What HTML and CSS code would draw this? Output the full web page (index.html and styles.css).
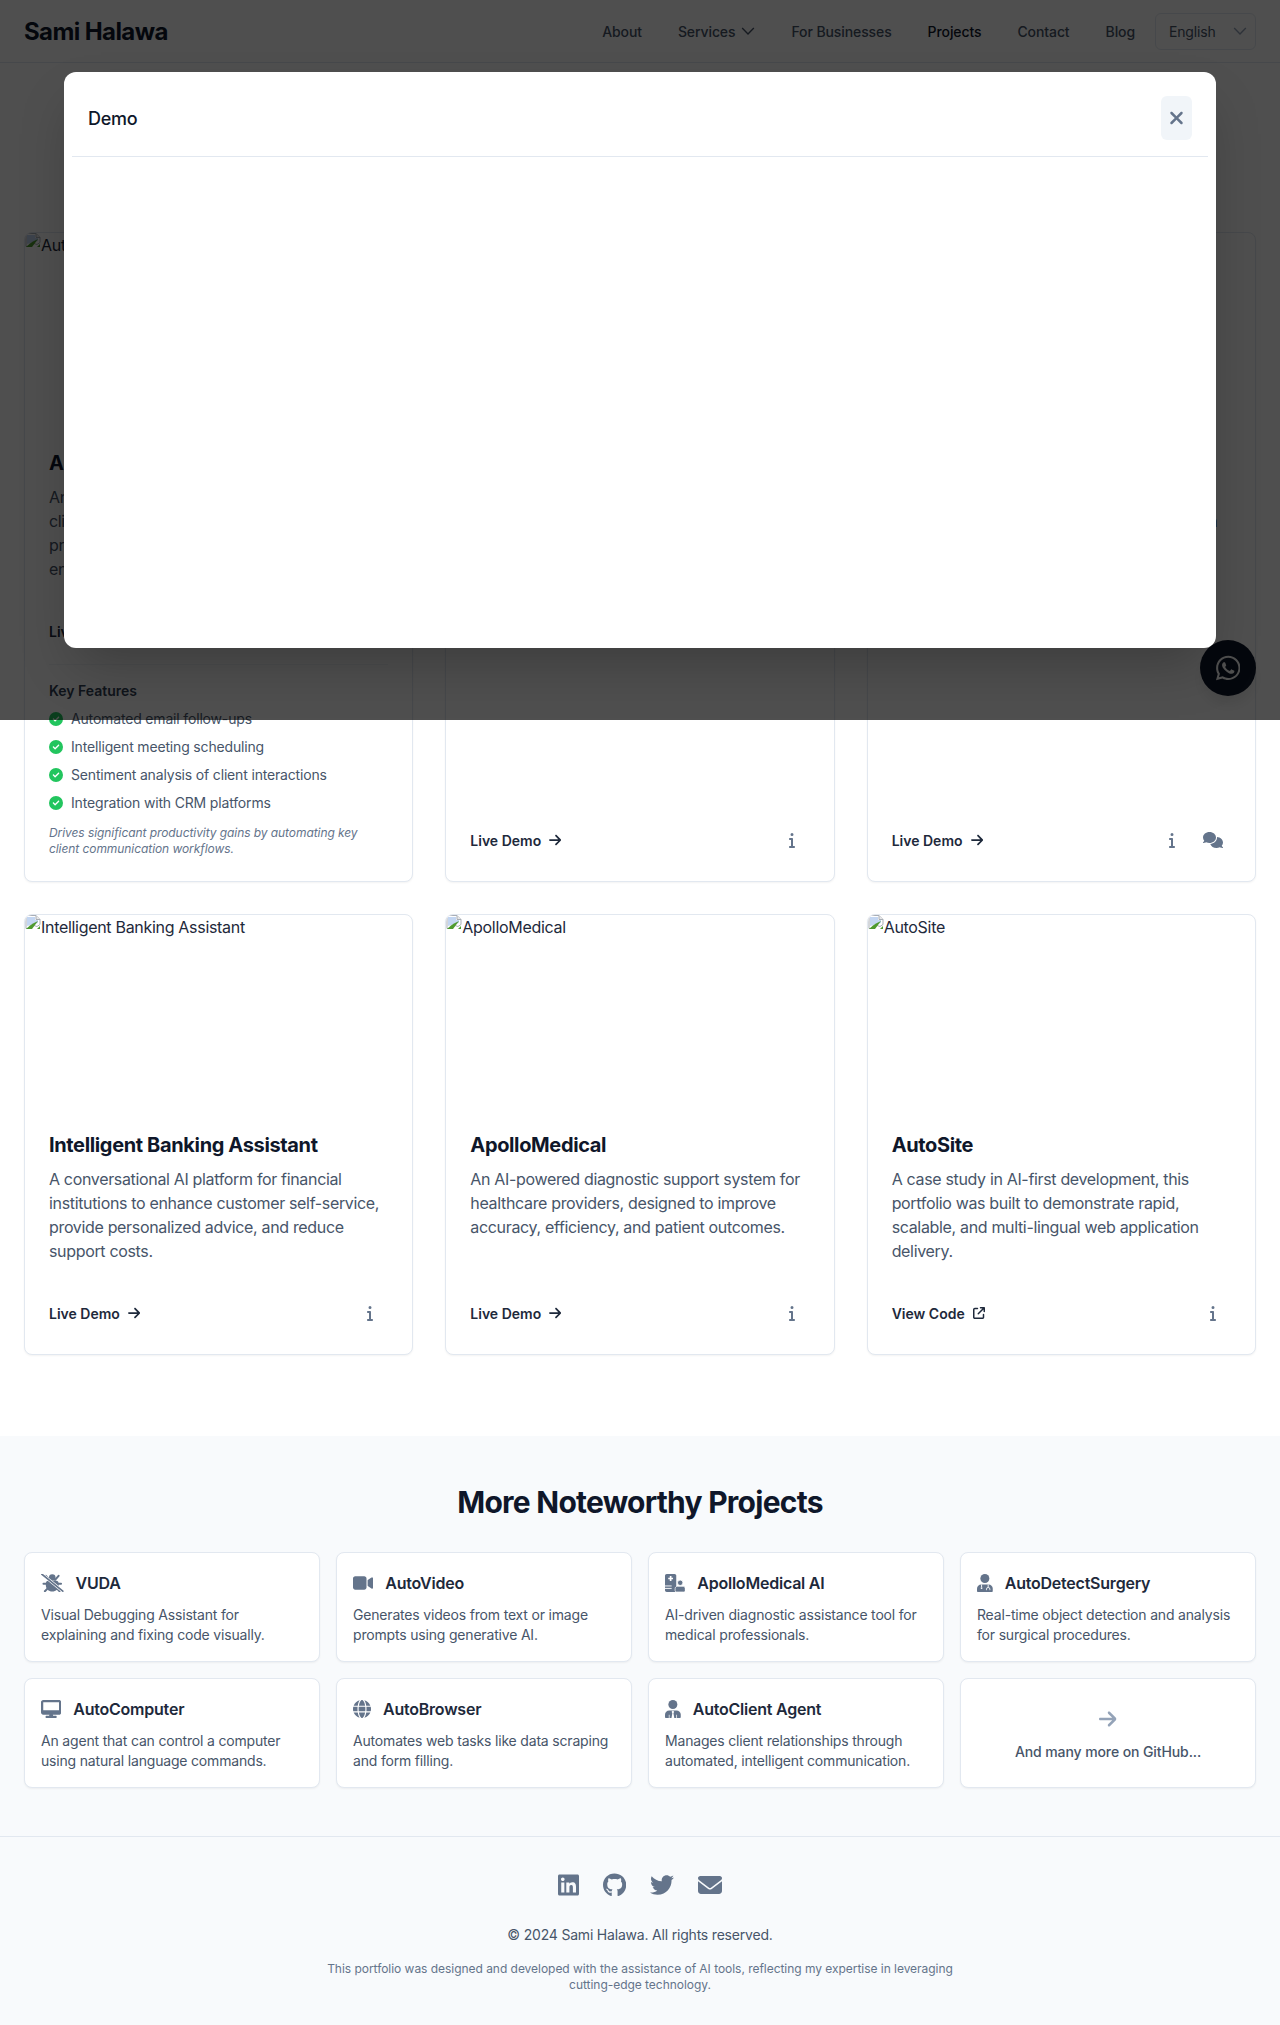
FILE: index.html
```html
<!DOCTYPE html>
<html lang="en">
<head>
  <meta charset="UTF-8">
  <title>Sami Halawa</title>
  <meta name="viewport" content="width=device-width, initial-scale=1.0">
  <link rel="stylesheet" href="styles.css">
</head>
<body>
  <svg class="defs" width="0" height="0" aria-hidden="true">
    <symbol id="i-arrow" viewBox="0 0 448 512"><path d="M438.6 278.6c12.5-12.5 12.5-32.8 0-45.3l-160-160c-12.5-12.5-32.8-12.5-45.3 0s-12.5 32.8 0 45.3L338.8 224 32 224c-17.7 0-32 14.3-32 32s14.3 32 32 32l306.7 0L233.4 393.4c-12.5 12.5-12.5 32.8 0 45.3s32.8 12.5 45.3 0l160-160z"/></symbol>
    <symbol id="i-info" viewBox="0 0 192 512"><path d="M48 80a48 48 0 1 1 96 0A48 48 0 1 1 48 80zM0 224c0-17.7 14.3-32 32-32H96c17.7 0 32 14.3 32 32V448h32c17.7 0 32 14.3 32 32s-14.3 32-32 32H32c-17.7 0-32-14.3-32-32s14.3-32 32-32H64V256H32c-17.7 0-32-14.3-32-32z"/></symbol>
    <symbol id="i-check" viewBox="0 0 512 512"><path d="M256 512A256 256 0 1 0 256 0a256 256 0 1 0 0 512zM369 209L241 337c-9.4 9.4-24.6 9.4-33.9 0l-64-64c-9.4-9.4-9.4-24.6 0-33.9s24.6-9.4 33.9 0l47 47L335 175c9.4-9.4 24.6-9.4 33.9 0s9.4 24.6 0 33.9z"/></symbol>
    <symbol id="i-chevron" viewBox="0 0 12 12"><path d="M1 3.500l5 5 5-5" fill="none" stroke="currentColor" stroke-width="1.200"/></symbol>
    <symbol id="i-broken" viewBox="0 0 16 16">
      <path d="M1 .5h10l4 4v5l-3 2-3-1-4 3H1z" fill="#fff" stroke="#a9aeb6"/>
      <path d="M2 2h8v3h3v3l-11 3z" fill="#c3d6f2"/>
      <path d="M1 14l4-3.500 3-2 5-2.500-6 8H1z" fill="#4e9a2f"/>
      <path d="M11 .5v4h4" fill="#e8e8e8" stroke="#a9aeb6"/>
      <path d="M12 14h3v-3z" fill="#4e9a2f"/>
    </symbol>
  </svg>

  <nav class="nav">
    <a class="logo">Sami Halawa</a>
    <div class="nav-links">
      <a>About</a>
      <a class="has-caret">Services <svg class="caret"><use href="#i-chevron"/></svg></a>
      <a>For Businesses</a>
      <a class="current">Projects</a>
      <a>Contact</a>
      <a>Blog</a>
    </div>
    <div class="lang">English <svg class="caret caret-soft"><use href="#i-chevron"/></svg></div>
  </nav>

  <main class="projects">
    <article class="card">
      <div class="thumb"><svg class="broken"><use href="#i-broken"/></svg>AutoClient</div>
      <div class="card-body">
        <h3>AutoClient</h3>
        <p class="desc">An intelligent agent that manages<br>client communication, automating<br>professional follow-ups and<br>engagement at scale.</p>
        <div class="card-actions">
          <a class="live">Live Demo <svg class="arrow"><use href="#i-arrow"/></svg></a>
          <div class="tools"><span class="tool"><svg class="i-info"><use href="#i-info"/></svg></span></div>
        </div>
        <div class="features">
          <h4>Key Features</h4>
          <ul>
            <li><svg class="tick"><use href="#i-check"/></svg>Automated email follow-ups</li>
            <li><svg class="tick"><use href="#i-check"/></svg>Intelligent meeting scheduling</li>
            <li><svg class="tick"><use href="#i-check"/></svg>Sentiment analysis of client interactions</li>
            <li><svg class="tick"><use href="#i-check"/></svg>Integration with CRM platforms</li>
          </ul>
          <p class="impact">Drives significant productivity gains by automating key client communication workflows.</p>
        </div>
      </div>
    </article>

    <article class="card">
      <div class="thumb"><svg class="broken"><use href="#i-broken"/></svg>AutoDoc</div>
      <div class="card-body">
        <h3>AutoDoc</h3>
        <p class="desc">A documentation agent that reads source code and writes clear guides for developers and teams.</p>
        <div class="card-actions">
          <a class="live">Live Demo <svg class="arrow"><use href="#i-arrow"/></svg></a>
          <div class="tools"><span class="tool"><svg class="i-info"><use href="#i-info"/></svg></span></div>
        </div>
      </div>
    </article>

    <article class="card">
      <div class="thumb"><svg class="broken"><use href="#i-broken"/></svg>AutoChat</div>
      <div class="card-body">
        <h3>AutoChat</h3>
        <p class="desc">A conversational agent for websites,<br>trained on company knowledge and built to a<br>answer customer questions at any<br>hour of the day.</p>
        <div class="card-actions">
          <a class="live">Live Demo <svg class="arrow"><use href="#i-arrow"/></svg></a>
          <div class="tools">
            <span class="tool"><svg class="i-info"><use href="#i-info"/></svg></span>
            <span class="tool"><svg class="i-comments" viewBox="0 0 640 512"><path d="M208 352c114.9 0 208-78.8 208-176S322.9 0 208 0S0 78.8 0 176c0 38.6 14.7 74.3 39.6 103.4c-3.5 9.4-8.7 17.7-14.2 24.7c-4.8 6.2-9.7 11-13.3 14.3c-1.8 1.6-3.3 2.9-4.3 3.7c-.5 .4-.9 .7-1.1 .8l-.2 .2 0 0 0 0C1 327.2-1.4 334.4 .8 340.9S9.1 352 16 352c21.8 0 43.8-5.6 62.1-12.5c9.2-3.5 17.8-7.4 25.3-11.4C134.1 343.3 169.8 352 208 352zM448 176c0 112.3-99.1 196.9-216.5 207C255.8 457.4 336.4 512 432 512c38.2 0 73.9-8.7 104.7-23.9c7.5 4 16 7.9 25.2 11.4c18.3 6.9 40.3 12.5 62.1 12.5c6.9 0 13.1-4.5 15.2-11.1c2.1-6.6-.2-13.8-5.8-17.9l0 0 0 0-.2-.2c-.2-.2-.6-.4-1.1-.8c-1-.8-2.5-2-4.3-3.7c-3.6-3.3-8.5-8.1-13.3-14.3c-5.5-7-10.7-15.4-14.2-24.7c24.9-29 39.6-64.7 39.6-103.4c0-92.8-84.9-168.9-192.6-175.5c.4 5.1 .6 10.3 .6 15.5z"/></svg></span>
          </div>
        </div>
      </div>
    </article>

    <article class="card">
      <div class="thumb"><svg class="broken"><use href="#i-broken"/></svg>Intelligent Banking Assistant</div>
      <div class="card-body">
        <h3>Intelligent Banking Assistant</h3>
        <p class="desc">A conversational AI platform for financial institutions to enhance customer self-service, provide personalized advice, and reduce support costs.</p>
        <div class="card-actions">
          <a class="live">Live Demo <svg class="arrow"><use href="#i-arrow"/></svg></a>
          <div class="tools"><span class="tool"><svg class="i-info"><use href="#i-info"/></svg></span></div>
        </div>
      </div>
    </article>

    <article class="card">
      <div class="thumb"><svg class="broken"><use href="#i-broken"/></svg>ApolloMedical</div>
      <div class="card-body">
        <h3>ApolloMedical</h3>
        <p class="desc">An AI-powered diagnostic support system for healthcare providers, designed to improve accuracy, efficiency, and patient outcomes.</p>
        <div class="card-actions">
          <a class="live">Live Demo <svg class="arrow"><use href="#i-arrow"/></svg></a>
          <div class="tools"><span class="tool"><svg class="i-info"><use href="#i-info"/></svg></span></div>
        </div>
      </div>
    </article>

    <article class="card">
      <div class="thumb"><svg class="broken"><use href="#i-broken"/></svg>AutoSite</div>
      <div class="card-body">
        <h3>AutoSite</h3>
        <p class="desc">A case study in AI-first development, this portfolio was built to demonstrate rapid, scalable, and multi-lingual web application delivery.</p>
        <div class="card-actions">
          <a class="live">View Code <svg class="ext" viewBox="0 0 512 512"><path d="M320 0c-17.7 0-32 14.3-32 32s14.3 32 32 32h82.7L201.4 265.4c-12.5 12.5-12.5 32.8 0 45.3s32.8 12.5 45.3 0L448 109.3V192c0 17.7 14.3 32 32 32s32-14.3 32-32V32c0-17.7-14.3-32-32-32H320zM80 32C35.8 32 0 67.8 0 112V432c0 44.2 35.8 80 80 80H400c44.2 0 80-35.8 80-80V320c0-17.7-14.3-32-32-32s-32 14.3-32 32V432c0 8.8-7.2 16-16 16H80c-8.8 0-16-7.2-16-16V112c0-8.8 7.2-16 16-16H192c17.7 0 32-14.3 32-32s-14.3-32-32-32H80z"/></svg></a>
          <div class="tools"><span class="tool"><svg class="i-info"><use href="#i-info"/></svg></span></div>
        </div>
      </div>
    </article>
  </main>

  <section class="more">
    <h2>More Noteworthy Projects</h2>
    <div class="more-grid">
      <div class="mini">
        <h4>
          <svg class="mini-icon" viewBox="0 0 640 512">
            <circle cx="320" cy="100" r="92"/>
            <path d="M198 190h244c34 0 60 34 60 90v40c0 96-76 180-182 180s-182-84-182-180v-40c0-56 26-90 60-90z"/>
            <path d="M140 50l100 120M500 50l-100 120M70 280h140M570 280h-140M110 490l110-110M530 490l-110-110" fill="none" stroke="#64748b" stroke-width="56" stroke-linecap="round"/>
            <path d="M20 0l600 490" fill="none" stroke="#fff" stroke-width="84"/>
            <path d="M20 0l600 490" fill="none" stroke="#64748b" stroke-width="46" stroke-linecap="round"/>
          </svg>
          VUDA
        </h4>
        <p>Visual Debugging Assistant for explaining and fixing code visually.</p>
      </div>
      <div class="mini">
        <h4>
          <svg class="mini-icon" viewBox="0 0 576 512"><path d="M0 128C0 92.7 28.7 64 64 64H320c35.3 0 64 28.7 64 64V384c0 35.3-28.7 64-64 64H64c-35.3 0-64-28.7-64-64V128zM559.1 99.8c10.4 5.6 16.9 16.4 16.9 28.2V384c0 11.8-6.5 22.6-16.9 28.2s-23 5-32.9-1.6l-96-64L416 337.1V320 192 174.9l14.2-9.5 96-64c9.8-6.5 22.4-7.2 32.9-1.6z"/></svg>
          AutoVideo
        </h4>
        <p>Generates videos from text or image prompts using generative AI.</p>
      </div>
      <div class="mini">
        <h4>
          <svg class="mini-icon" viewBox="0 0 576 512">
            <path d="M48 0h224c26 0 48 22 48 48v416c0 26-22 48-48 48H48c-26 0-48-22-48-48V48C0 22 22 0 48 0z"/>
            <path d="M136 60h48v44h44v48h-44v44h-48v-44H92v-48h44z" fill="#fff"/>
            <path d="M0 340h190M0 410h190" stroke="#fff" stroke-width="26"/>
            <circle cx="432" cy="250" r="78" stroke="#fff" stroke-width="24"/>
            <path d="M352 350h160c36 0 64 30 64 66v56c0 22-18 40-40 40H328c-22 0-40-18-40-40v-56c0-36 28-66 64-66z" stroke="#fff" stroke-width="20"/>
          </svg>
          ApolloMedical AI
        </h4>
        <p>AI-driven diagnostic assistance tool for medical professionals.</p>
      </div>
      <div class="mini">
        <h4>
          <svg class="mini-icon" viewBox="0 0 448 512">
            <circle cx="224" cy="128" r="128"/>
            <path d="M120 300h208c66 0 120 54 120 120v60c0 18-14 32-32 32H32c-18 0-32-14-32-32v-60c0-66 54-120 120-120z"/>
            <path d="M130 300v70M318 300v80" stroke="#fff" stroke-width="26" fill="none"/>
            <circle cx="130" cy="400" r="26" fill="#fff"/>
            <path d="M270 460v-30a48 48 0 0 1 96 0v30" stroke="#fff" stroke-width="24" fill="none"/>
          </svg>
          AutoDetectSurgery
        </h4>
        <p>Real-time object detection and analysis for surgical procedures.</p>
      </div>
      <div class="mini">
        <h4>
          <svg class="mini-icon" viewBox="0 0 576 512"><path d="M64 0C28.700 0 0 28.700 0 64V352c0 35.300 28.700 64 64 64H240l-10.700 32H160c-17.700 0-32 14.300-32 32s14.300 32 32 32H416c17.700 0 32-14.300 32-32s-14.300-32-32-32H346.700L336 416H512c35.300 0 64-28.700 64-64V64c0-35.300-28.700-64-64-64H64zM512 64V288H64V64H512z"/></svg>
          AutoComputer
        </h4>
        <p>An agent that can control a computer using natural language commands.</p>
      </div>
      <div class="mini">
        <h4>
          <svg class="mini-icon" viewBox="0 0 512 512"><path d="M352 256c0 22.2-1.2 43.6-3.3 64H163.3c-2.2-20.4-3.3-41.8-3.3-64s1.2-43.6 3.3-64H348.7c2.2 20.4 3.3 41.8 3.3 64zm28.8-64H503.9c5.3 20.5 8.1 41.9 8.1 64s-2.8 43.5-8.1 64H380.8c2.1-20.6 3.2-42 3.2-64s-1.1-43.4-3.2-64zm112.6-32H376.7c-10-63.9-29.8-117.4-55.3-151.6c78.3 20.7 142 77.5 171.9 151.6zm-149.1 0H167.7c6.1-36.4 15.5-68.6 27-94.7c10.5-23.6 22.2-40.7 33.5-51.5C239.4 3.2 248.7 0 256 0s16.6 3.2 27.8 13.8c11.3 10.8 23 27.9 33.5 51.5c11.6 26 20.9 58.2 27 94.7zm-209 0H18.6C48.6 85.9 112.2 29.1 190.6 8.4C165.1 42.6 145.3 96.1 135.3 160zM8.1 192H131.2c-2.1 20.6-3.2 42-3.2 64s1.1 43.4 3.2 64H8.1C2.8 299.5 0 278.1 0 256s2.8-43.5 8.1-64zM194.7 446.6c-11.6-26-20.9-58.2-27-94.6H344.3c-6.1 36.4-15.5 68.6-27 94.6c-10.5 23.6-22.2 40.7-33.5 51.5C272.6 508.8 263.3 512 256 512s-16.6-3.2-27.8-13.8c-11.3-10.8-23-27.9-33.5-51.5zM135.3 352c10 63.9 29.8 117.4 55.3 151.6C112.2 482.9 48.6 426.1 18.6 352H135.3zm358.1 0c-30 74.1-93.6 130.9-171.9 151.6c25.5-34.2 45.2-87.7 55.3-151.6H493.4z"/></svg>
          AutoBrowser
        </h4>
        <p>Automates web tasks like data scraping and form filling.</p>
      </div>
      <div class="mini">
        <h4>
          <svg class="mini-icon" viewBox="0 0 448 512">
            <circle cx="224" cy="128" r="128"/>
            <path d="M120 300h208c66 0 120 54 120 120v60c0 18-14 32-32 32H32c-18 0-32-14-32-32v-60c0-66 54-120 120-120z"/>
            <path d="M224 300l-36 36 20 40-24 136h80l-24-136 20-40z" fill="#fff"/>
            <path d="M120 420v92M328 420v92" stroke="#fff" stroke-width="20"/>
          </svg>
          AutoClient Agent
        </h4>
        <p>Manages client relationships through automated, intelligent communication.</p>
      </div>
      <div class="mini mini-more">
        <svg class="more-arrow"><use href="#i-arrow"/></svg>
        <p>And many more on GitHub...</p>
      </div>
    </div>
  </section>

  <footer class="footer">
    <div class="social">
      <svg viewBox="0 0 448 512" class="s-448"><path d="M416 32H31.900C14.300 32 0 46.500 0 64.300v383.400C0 465.500 14.300 480 31.900 480H416c17.600 0 32-14.500 32-32.300V64.300c0-17.800-14.400-32.300-32-32.300zM135.400 416H69V202.200h66.500V416zm-33.200-243c-21.300 0-38.500-17.300-38.500-38.500S80.900 96 102.200 96c21.200 0 38.500 17.300 38.500 38.500 0 21.300-17.200 38.500-38.500 38.500zm282.100 243h-66.400V312c0-24.800-.5-56.700-34.500-56.700-34.600 0-39.900 27-39.900 54.900V416h-66.400V202.200h63.700v29.200h.9c8.900-16.800 30.600-34.500 62.900-34.500 67.200 0 79.700 44.300 79.700 101.900V416z"/></svg>
      <svg viewBox="0 0 496 512" class="s-496"><path d="M165.900 397.400c0 2-2.300 3.600-5.200 3.600-3.300.3-5.600-1.300-5.600-3.600 0-2 2.300-3.600 5.200-3.600 3-.3 5.600 1.300 5.600 3.600zm-31.100-4.500c-.7 2 1.300 4.300 4.300 4.900 2.600 1 5.600 0 6.200-2s-1.300-4.300-4.300-5.200c-2.600-.7-5.500.3-6.200 2.300zm44.200-1.700c-2.900.7-4.900 2.600-4.600 4.900.3 2 2.900 3.300 5.900 2.600 2.900-.7 4.900-2.600 4.600-4.600-.3-1.900-3-3.200-5.900-2.900zM244.800 8C106.100 8 0 113.300 0 252c0 110.900 69.800 205.800 169.500 239.200 12.800 2.300 17.300-5.600 17.300-12.100 0-6.200-.3-40.400-.3-61.400 0 0-70 15-84.700-29.800 0 0-11.400-29.100-27.800-36.600 0 0-22.900-15.700 1.600-15.400 0 0 24.900 2 38.600 25.800 21.900 38.600 58.600 27.500 72.900 20.900 2.300-16 8.800-27.100 16-33.700-55.900-6.200-112.300-14.300-112.300-110.500 0-27.500 7.600-41.300 23.600-58.900-2.600-6.500-11.100-33.300 2.600-67.900 20.900-6.500 69 27 69 27 20-5.600 41.500-8.500 62.800-8.500s42.800 2.900 62.800 8.500c0 0 48.100-33.600 69-27 13.700 34.700 5.200 61.400 2.600 67.900 16 17.700 25.800 31.500 25.800 58.900 0 96.500-58.900 104.200-114.800 110.500 9.200 7.900 17 22.900 17 46.400 0 33.700-.3 75.400-.3 83.600 0 6.500 4.600 14.400 17.300 12.100C428.200 457.800 496 362.900 496 252 496 113.300 383.500 8 244.800 8z"/></svg>
      <svg viewBox="0 0 512 512" class="s-512"><path d="M459.370 151.716c.325 4.548.325 9.097.325 13.645 0 138.720-105.583 298.558-298.558 298.558-59.452 0-114.680-17.219-161.137-47.106 8.447.974 16.568 1.299 25.340 1.299 49.055 0 94.213-16.568 130.274-44.832-46.132-.975-84.792-31.188-98.112-72.772 6.498.974 12.995 1.624 19.818 1.624 9.421 0 18.843-1.300 27.614-3.573-48.081-9.747-84.143-51.980-84.143-102.985v-1.299c13.969 7.797 30.214 12.670 47.431 13.319-28.264-18.843-46.781-51.005-46.781-87.391 0-19.492 5.197-37.360 14.294-52.954 51.655 63.675 129.300 105.258 216.365 109.807-1.624-7.797-2.599-15.918-2.599-24.040 0-57.828 46.782-104.934 104.934-104.934 30.213 0 57.502 12.670 76.670 33.137 23.715-4.548 46.456-13.320 66.599-25.340-7.798 24.366-24.366 44.833-46.132 57.827 21.117-2.273 41.584-8.122 60.426-16.243-14.292 20.791-32.161 39.308-52.628 54.253z"/></svg>
      <svg viewBox="0 0 512 512" class="s-512"><path d="M48 64C21.500 64 0 85.500 0 112c0 15.100 7.100 29.300 19.200 38.400L236.800 313.600c11.400 8.500 27 8.500 38.400 0L492.800 150.400c12.100-9.100 19.200-23.300 19.200-38.400c0-26.500-21.500-48-48-48H48zM0 176V384c0 35.300 28.700 64 64 64H448c35.300 0 64-28.700 64-64V176L294.400 339.200c-22.800 17.100-52 17.100-76.800 0L0 176z"/></svg>
    </div>
    <p class="copy">© 2024 Sami Halawa. All rights reserved.</p>
    <p class="note">This portfolio was designed and developed with the assistance of AI tools, reflecting my expertise in leveraging cutting-edge technology.</p>
  </footer>

  <a class="whatsapp">
    <svg viewBox="0 0 448 512"><path d="M380.900 97.100C339 55.100 283.200 32 223.900 32c-122.400 0-222 99.600-222 222 0 39.100 10.200 77.300 29.600 111L0 480l117.700-30.900c32.400 17.700 68.900 27 106.100 27h.1c122.300 0 224.100-99.600 224.100-222 0-59.300-25.200-115-67.100-157zm-157 341.600c-33.200 0-65.700-8.900-94-25.700l-6.700-4-69.800 18.300L72 359.200l-4.400-7c-18.500-29.400-28.200-63.300-28.200-98.200 0-101.700 82.800-184.500 184.600-184.500 49.300 0 95.600 19.200 130.400 54.100 34.800 34.900 56.200 81.200 56.100 130.500 0 101.800-84.900 184.600-186.600 184.600zm101.200-138.200c-5.500-2.800-32.800-16.200-37.900-18-5.100-1.900-8.800-2.800-12.500 2.800-3.700 5.600-14.300 18-17.600 21.800-3.200 3.700-6.500 4.200-12 1.400-32.600-16.300-54-29.100-75.500-66-5.700-9.800 5.700-9.100 16.300-30.300 1.800-3.700.9-6.900-.5-9.700-1.400-2.800-12.500-30.100-17.100-41.200-4.500-10.800-9.100-9.300-12.500-9.500-3.200-.2-6.900-.2-10.600-.2-3.700 0-9.700 1.400-14.800 6.900-5.100 5.600-19.400 19-19.400 46.300 0 27.300 19.900 53.700 22.600 57.400 2.800 3.700 39.100 59.700 94.800 83.800 35.200 15.200 49 16.500 66.600 13.900 10.700-1.600 32.800-13.400 37.400-26.400 4.600-13 4.600-24.100 3.200-26.400-1.300-2.500-5-3.900-10.500-6.600z"/></svg>
  </a>

  <div class="overlay">
    <div class="modal">
      <div class="modal-head">
        <span class="modal-title">Demo</span>
        <button class="modal-close"><svg viewBox="0 0 384 512"><path d="M342.600 150.600c12.500-12.500 12.500-32.800 0-45.300s-32.800-12.500-45.300 0L192 210.700 86.600 105.400c-12.500-12.500-32.800-12.500-45.300 0s-12.500 32.800 0 45.300L146.700 256 41.400 361.400c-12.500 12.500-12.500 32.800 0 45.300s32.800 12.500 45.300 0L192 301.300 297.400 406.600c12.500 12.500 32.800 12.500 45.300 0s12.500-32.800 0-45.300L237.300 256 342.600 150.600z"/></svg></button>
      </div>
    </div>
  </div>
</body>
</html>
```

FILE: styles.css
```css
* {
  box-sizing: border-box;
}
body {
  margin: 0;
  position: relative;
  font-family: 'Inter', 'Liberation Sans', sans-serif;
  background-color: #fff;
  color: #1e293b;
}
h2, h3, h4, p, ul {
  margin: 0;
  padding: 0;
}
.defs {
  position: absolute;
}

/* nav */
.nav {
  height: 63px;
  display: flex;
  align-items: center;
  padding: 0 24px;
  background-color: #fff;
  border-bottom: 1px solid #e2e8f0;
}
.logo {
  font-size: 24px;
  font-weight: 700;
  letter-spacing: -.025em;
  color: #0f172a;
}
.nav-links {
  margin-left: auto;
  display: flex;
  gap: 36px;
  font-size: 14px;
  font-weight: 500;
  letter-spacing: -.007em;
  color: #475569;
}
.nav-links .current {
  color: #0f172a;
}
.has-caret {
  display: flex;
  align-items: center;
  gap: 6px;
}
.caret {
  width: 14px;
  height: 14px;
}
.caret-soft {
  color: #94a3b8;
}
.lang {
  width: 101px;
  height: 37px;
  margin-left: 20px;
  padding: 0 8px 0 13px;
  display: flex;
  align-items: center;
  justify-content: space-between;
  font-size: 14px;
  letter-spacing: -.012em;
  color: #475569;
  border: 1px solid #e2e8f0;
  border-radius: 6px;
}

/* project cards */
.projects {
  padding: 169px 24px 81px;
  display: grid;
  grid-template-columns: repeat(3, 1fr);
  gap: 32px;
}
.card {
  display: flex;
  flex-direction: column;
  background-color: #fff;
  border: 1px solid #e2e8f0;
  border-radius: 8px;
  box-shadow: 0 1px 2px rgba(0, 0, 0, .05);
  overflow: hidden;
}
.thumb {
  height: 192px;
  display: flex;
  align-items: flex-start;
  font-size: 16px;
  line-height: 24px;
  letter-spacing: -.019em;
  color: #1e293b;
}
.broken {
  width: 16px;
  height: 16px;
  flex-shrink: 0;
}
.card-body {
  flex: 1;
  padding: 24px;
  display: flex;
  flex-direction: column;
}
.card h3 {
  font-size: 20px;
  line-height: 28px;
  font-weight: 700;
  letter-spacing: -.018em;
  color: #0f172a;
  margin-bottom: 8px;
}
.desc {
  font-size: 16px;
  line-height: 24px;
  letter-spacing: -.021em;
  color: #475569;
  margin-bottom: 33px;
}
.card-actions {
  margin-top: auto;
  height: 34px;
  display: flex;
  align-items: center;
  justify-content: space-between;
}
.live {
  display: flex;
  align-items: center;
  gap: 8px;
  font-size: 14px;
  font-weight: 600;
  color: #1e293b;
}
.arrow {
  width: 12.25px;
  height: 14px;
  fill: #1e293b;
}
.ext {
  width: 12px;
  height: 12px;
  fill: #1e293b;
}
.tools {
  display: flex;
  gap: 5px;
}
.tool {
  width: 36px;
  height: 34px;
  display: flex;
  align-items: center;
  justify-content: center;
}
.i-info {
  width: 6px;
  height: 16px;
  fill: #64748b;
}
.i-comments {
  width: 20px;
  height: 16px;
  fill: #64748b;
}
.features {
  margin-top: 16px;
  padding-top: 16px;
  border-top: 1px solid #f1f5f9;
}
.features h4 {
  font-size: 14px;
  line-height: 20px;
  font-weight: 600;
  color: #334155;
  margin-bottom: 8px;
}
.features ul {
  list-style: none;
  display: flex;
  flex-direction: column;
  gap: 8px;
}
.features li {
  display: flex;
  align-items: center;
  gap: 8px;
  font-size: 14px;
  line-height: 20px;
  letter-spacing: -.012em;
  color: #475569;
}
.tick {
  width: 14px;
  height: 14px;
  fill: #22c55e;
  flex-shrink: 0;
}
.impact {
  margin-top: 12px;
  font-size: 12px;
  line-height: 16px;
  font-style: italic;
  letter-spacing: -.006em;
  color: #64748b;
}

/* more projects */
.more {
  padding: 48px 24px;
  background-color: #f8fafc;
}
.more h2 {
  font-size: 30px;
  line-height: 36px;
  font-weight: 700;
  letter-spacing: -.025em;
  color: #0f172a;
  text-align: center;
  margin-bottom: 32px;
}
.more-grid {
  display: grid;
  grid-template-columns: repeat(4, 1fr);
  gap: 16px;
}
.mini {
  height: 110px;
  padding: 16px;
  background-color: #fff;
  border: 1px solid #e2e8f0;
  border-radius: 8px;
  box-shadow: 0 1px 2px rgba(0, 0, 0, .05);
}
.mini h4 {
  display: flex;
  align-items: center;
  gap: 12px;
  font-size: 16px;
  line-height: 28px;
  font-weight: 600;
  letter-spacing: -.014em;
  color: #1e293b;
  margin-bottom: 8px;
}
.mini p {
  font-size: 14px;
  line-height: 20px;
  letter-spacing: -.013em;
  color: #475569;
}
.mini-icon {
  height: 18px;
  width: auto;
  fill: #64748b;
  flex-shrink: 0;
}
.mini-more {
  display: flex;
  flex-direction: column;
  align-items: center;
  justify-content: center;
  gap: 13px;
  padding-top: 20px;
}
.mini-more p {
  font-weight: 500;
  letter-spacing: -.007em;
}
.more-arrow {
  width: 17.5px;
  height: 20px;
  fill: #94a3b8;
}

/* footer */
.footer {
  padding: 32px 24px;
  background-color: #f8fafc;
  border-top: 1px solid #e2e8f0;
  text-align: center;
}
.social {
  height: 32px;
  display: flex;
  justify-content: center;
  align-items: center;
  gap: 24px;
  margin-bottom: 24px;
}
.social svg {
  height: 24px;
  fill: #64748b;
}
.s-448 {
  width: 21px;
}
.s-496 {
  width: 23.25px;
}
.s-512 {
  width: 24px;
}
.copy {
  font-size: 14px;
  line-height: 20px;
  letter-spacing: -.014em;
  color: #475569;
}
.note {
  max-width: 640px;
  margin: 16px auto 0;
  font-size: 12px;
  line-height: 16px;
  letter-spacing: -.003em;
  color: #64748b;
}

/* floating button and demo dialog, both over the page */
.whatsapp {
  position: absolute;
  left: 1200px;
  top: 640px;
  width: 56px;
  height: 56px;
  display: flex;
  align-items: center;
  justify-content: center;
  background-color: #0f172a;
  border-radius: 50%;
  box-shadow: 0 10px 15px -3px rgba(0, 0, 0, .1);
}
.whatsapp svg {
  width: 24.5px;
  height: 28px;
  fill: #fff;
}
.overlay {
  position: absolute;
  left: 0;
  top: 0;
  width: 100%;
  height: 720px;
  padding: 72px 64px;
  background-color: rgba(0, 0, 0, .69);
}
.modal {
  height: 576px;
  padding: 8px;
  background-color: #fff;
  border-radius: 12px;
  box-shadow: 0 25px 50px -12px rgba(0, 0, 0, .25);
}
.modal-head {
  padding: 16px;
  display: flex;
  align-items: center;
  justify-content: space-between;
  border-bottom: 1px solid #e2e8f0;
}
.modal-title {
  font-size: 18px;
  font-weight: 500;
  letter-spacing: -.017em;
  color: #0f172a;
}
.modal-close {
  width: 31px;
  height: 44px;
  padding: 0;
  display: flex;
  align-items: center;
  justify-content: center;
  background-color: #f1f5f9;
  border: none;
  border-radius: 6px;
}
.modal-close svg {
  width: 15px;
  height: 20px;
  fill: #64748b;
}
```
